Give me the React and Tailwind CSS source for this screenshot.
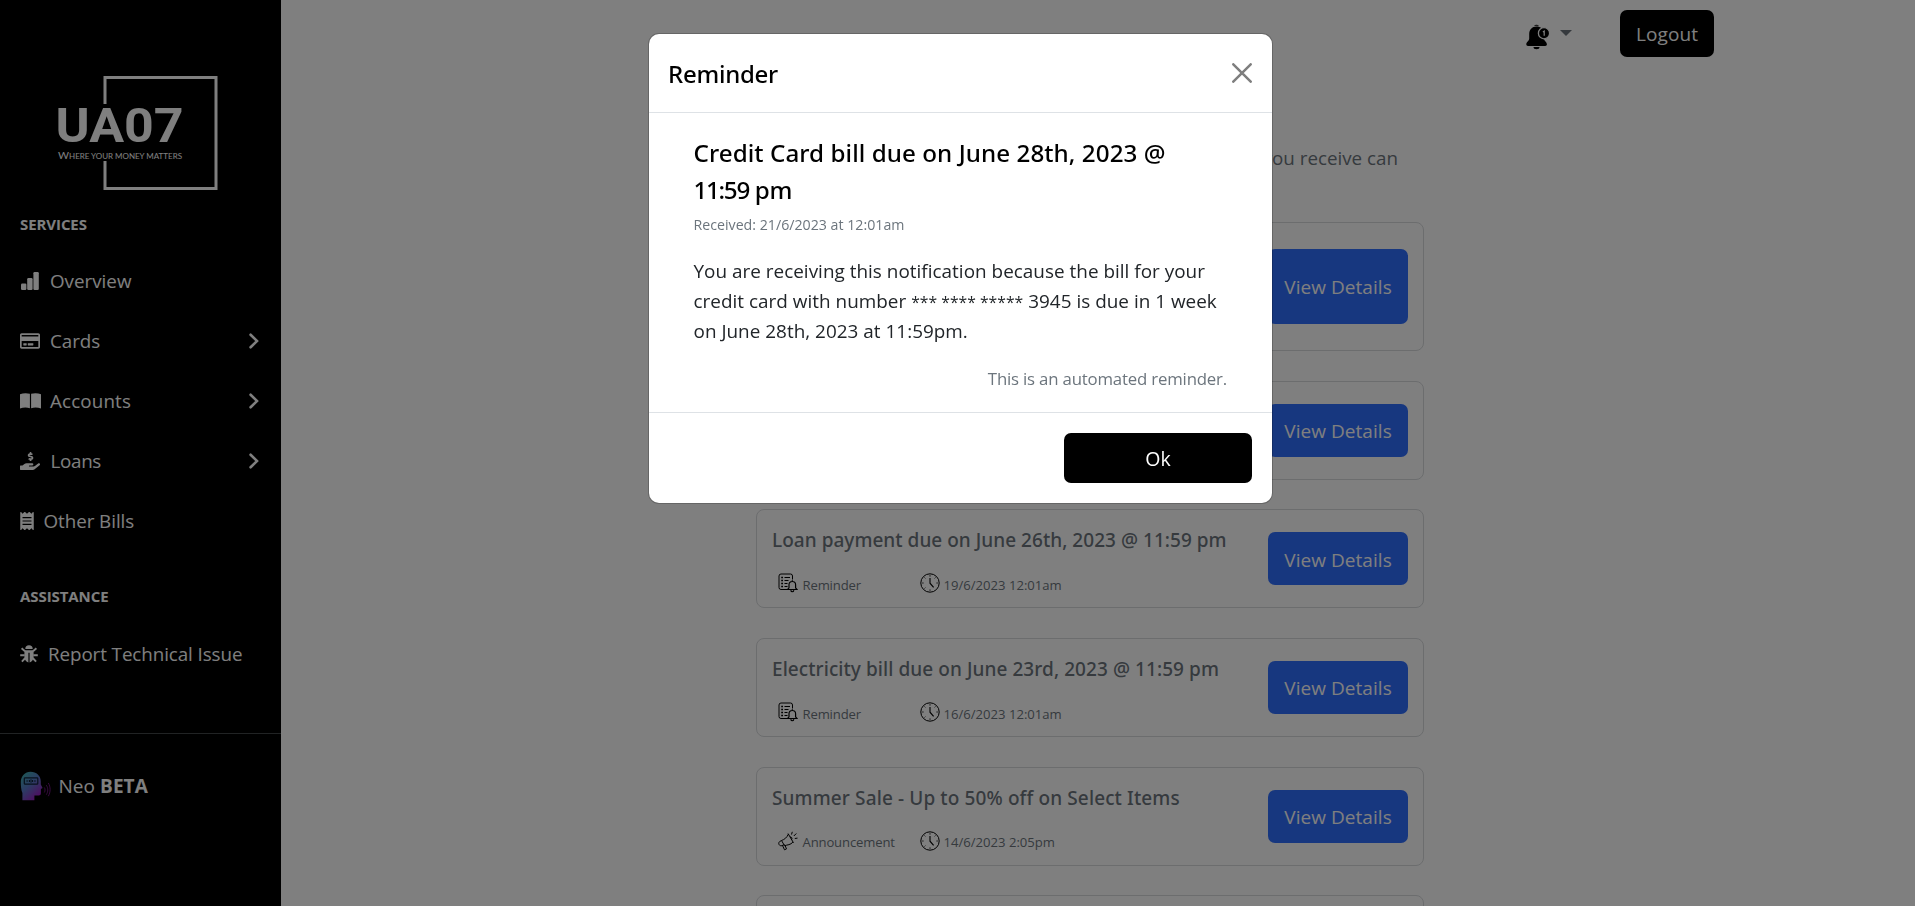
import React from 'react';
import { FaRegCreditCard, FaHandHoldingUsd, FaReceipt } from 'react-icons/fa';

function BarsIcon() {
  return (
    <svg className="h-[18px] w-[18px]" viewBox="0 0 18 18" fill="currentColor">
      <rect x="0" y="11.5" width="5.400" height="6.5" rx="1.2" />
      <rect x="6.200" y="6" width="5.400" height="12" rx="1.2" />
      <rect x="12.400" y="0" width="5.400" height="18" rx="1.2" />
    </svg>
  );
}

function BookIcon() {
  return (
    <svg className="h-4 w-[21px]" viewBox="0 0 21 16" fill="currentColor">
      <path d="M0 1.2C3 -.1 7 -.2 9.900 .8v14.400C7 14.200 3 14.200 0 15.600z" />
      <path d="M21 1.2C18 -.1 14 -.2 11.100 .8v14.400c2.900-1 6.900-1 9.900.4z" />
    </svg>
  );
}

function BugIcon() {
  return (
    <svg className="size-[18px]" viewBox="0 0 18 18" fill="currentColor">
      <path d="M5.300 3.900a3.700 3.700 0 0 1 7.400 0z" />
      <path d="M4.400 5.200h9.200v6.300c0 3.200-1.800 5.500-4 6V7.800h-1.200v9.700c-2.200-.5-4-2.800-4-6z" />
      <path d="M1.600 3.300l3.400 3M16.400 3.300l-3.400 3M.2 10.200h4.500M17.800 10.200h-4.500M1.900 16.700L5.300 13M16.100 16.700L12.700 13" stroke="currentColor" strokeWidth="1.900" />
    </svg>
  );
}

function Chevron() {
  return (
    <svg className="mr-[2px] mb-px ml-auto h-4 w-[10px]" viewBox="0 0 10 16" fill="none" stroke="currentColor" strokeWidth="2.600" strokeLinecap="round" strokeLinejoin="miter">
      <path d="M1.600 1.700L8 8l-6.400 6.300" />
    </svg>
  );
}

function Logo() {
  return (
    <svg className="h-[120px] w-[170px]" viewBox="0 0 170 120">
      <path d="M52 31V4.500h111v110.900H52V88" fill="none" stroke="#fff" strokeWidth="3" />
      <text x="2.500" y="69" textLength="128" lengthAdjust="spacingAndGlyphs" fill="#fff" className="font-[Roboto] text-[48px] font-bold">UA07</text>
      <text x="5" y="85.500" textLength="124" lengthAdjust="spacingAndGlyphs" fill="#fff" className="font-[Lato] text-[7.5px]">
        <tspan className="text-[10px]">W</tspan>HERE YOUR MONEY MATTERS
      </text>
    </svg>
  );
}

function NeoIcon() {
  return (
    <svg className="h-[30px] w-[31px]" viewBox="0 0 31 30">
      <defs>
        <linearGradient id="neo" x1="0" y1="0" x2="0.700" y2="1">
          <stop offset="0" stopColor="#38b8a8" />
          <stop offset="0.500" stopColor="#5878c8" />
          <stop offset="1" stopColor="#a018c0" />
        </linearGradient>
      </defs>
      <path d="M10.500 .8C16.500 .8 20.800 5 20.800 10.500v3l1.800 3.600-1.700.9v4.300c0 1.600-.8 2.200-2.200 2.200h-4.300v4.800H2.400V22C1 19 .8 14 .8 11 .8 5.500 5 .8 10.500 .8z" fill="url(#neo)" />
      <rect x="4.300" y="6.800" width="13.500" height="6.400" rx=".8" fill="none" stroke="#10233a" strokeWidth="1.200" />
      <path d="M6.300 10h2M13.800 10h2M9.500 9v2M11 8.300v3.400M12.500 9v2" stroke="#10233a" strokeWidth="1" />
      <path d="M24.300 16.500c1 1.500 1 3.400 0 5M26.300 14.200c2 3 2 6.400 0 9.500M28.300 12c2.400 4 2.400 9 0 13.200" fill="none" stroke="#8a1ba0" strokeWidth=".8" />
    </svg>
  );
}

function BellIcon() {
  return (
    <svg className="h-[26px] w-[24px]" viewBox="0 0 24 26">
      <path d="M8 1.800a2.800 1.800 0 0 1 5 0zM7.500 23h6a3 2.200 0 0 1-6 0z" />
      <path d="M10.500 2.600C6 2.600 3.200 6 3.200 10v4.500C3.200 17 .3 18 .3 20.300c0 1.200.7 1.700 1.700 1.700h17.200c1.100 0 1.700-.6 1.700-1.700 0-2.300-2.800-3.300-3-5.800z" />
      <path d="M10.500 2.600c4 0 7 2.600 7.400 6.800v5.600H10z" />
      <circle cx="18" cy="9.200" r="5.600" fill="#000" stroke="#fff" strokeWidth="1.300" />
      <path d="M16.900 8l1.300-.9v4.600" fill="none" stroke="#fff" strokeWidth="1.200" />
    </svg>
  );
}

function ReminderIcon() {
  return (
    <svg className="h-5 w-5" viewBox="0 0 20 20" fill="none" stroke="#000" strokeWidth="1">
      <path d="M9.500 16.500H3a2 2 0 0 1-2-2V3a2 2 0 0 1 2-2h9.500a2 2 0 0 1 2 2v3.500" />
      <path d="M3.200 4.500h1.800M3.200 7.500h1.800M3.200 10.500h1.800M3.200 13.500h1.800" strokeWidth="1.700" />
      <path d="M6.500 4.500h5.500M6.500 7.500h4M6.500 10.500h3M6.500 13.500h3" />
      <path d="M9.600 16.500l1.400-1.700v-3a3.300 3.300 0 0 1 6.600 0v3l1.400 1.700zM14.300 8.500V7.200M12.700 17.300c.6 1.900 2.600 1.900 3.200 0" strokeWidth="1.200" />
    </svg>
  );
}

function MegaphoneIcon() {
  return (
    <svg className="h-5 w-5" viewBox="0 0 20 20" fill="none" stroke="#000" strokeWidth="1" strokeLinejoin="round">
      <path d="M10 2.500l5.500 9.300M10.300 3.200C9 6.500 6.500 8.500 3.500 9.500l3 5.200c3-.9 6-.8 8.400-3.500" />
      <path d="M3.500 9.500l-1.800 1c-1 .8-1.200 2-.6 3.100s1.800 1.400 2.900 1l2.500-1M4.500 14.500l2 4.300 2-.9-1.500-3.500M12 6c1.500-.3 2.500 1.200 1.700 2.500" />
      <path d="M13.500 3.500l.8-2.700M15.800 5l2.500-2.500M16.800 7.500l2.700-.4" />
    </svg>
  );
}

function ClockIcon() {
  return (
    <svg className="h-5 w-5" viewBox="0 0 20 20" fill="none" stroke="#000" strokeWidth="1">
      <circle cx="10" cy="10" r="9.200" />
      <path d="M10 5v5.200l3.600 4.200" strokeWidth="1.100" />
      <path d="M10 2.300v1.200M10 16.500v1.200M2.300 10h1.200M16.500 10h1.200M4.600 4.600l.7.7M14.700 5.300l.7-.7M4.600 15.400l.7-.7" />
    </svg>
  );
}

function NavItem({ icon, label, chevron, gap, tracking }) {
  return (
    <a className={`flex h-[60px] items-center pr-5 pl-5 text-[18.8px] ${tracking || ''}`}>
      <span className={`flex shrink-0 items-center ${gap}`}>{icon}</span>
      <span>{label}</span>
      {chevron && <Chevron />}
    </a>
  );
}

function Sidebar() {
  return (
    <aside className="h-[906px] w-[281px] shrink-0 bg-black text-white">
      <div className="pt-[73px] pl-[53px]"><Logo /></div>
      <h2 className="mt-[21px] pl-5 text-[15px] leading-5 font-bold tracking-[-0.080px]">SERVICES</h2>
      <nav className="mt-[17px]">
        <NavItem icon={<span className="ml-px"><BarsIcon /></span>} label="Overview" gap="w-[30px]" />
        <NavItem icon={<FaRegCreditCard className="h-[18px] w-5" />} label="Cards" gap="w-[30px]" tracking="tracking-[-0.05px]" chevron />
        <NavItem icon={<BookIcon />} label="Accounts" gap="w-[30px]" tracking="tracking-[0.14px]" chevron />
        <NavItem icon={<FaHandHoldingUsd className="size-5" />} label="Loans" gap="w-[30.500px]" tracking="tracking-[-0.3px]" chevron />
        <NavItem icon={<FaReceipt className="h-[18px] w-[14px]" />} label="Other Bills" gap="w-[23.500px]" tracking="tracking-[-0.05px]" />
      </nav>
      <h2 className="mt-[35px] pl-5 text-[15px] leading-5 font-bold tracking-[-0.080px]">ASSISTANCE</h2>
      <div className="mt-[18px]">
        <NavItem icon={<BugIcon />} label="Report Technical Issue" gap="w-[28px]" tracking="tracking-[-0.08px]" />
      </div>
      <div className="mt-[49px] border-t border-[#424649] pt-[37px] pl-5">
        <div className="flex items-center gap-[7.500px] text-[19px] tracking-[0.060px]">
          <NeoIcon />
          <span>Neo <b className="font-bold">BETA</b></span>
        </div>
      </div>
    </aside>
  );
}

function DetailsButton({ tall }) {
  return (
    <button className={`w-[140px] shrink-0 rounded-[7px] bg-[#2e6eff] pt-[2px] text-[19px] tracking-[0.05px] text-white ${tall ? 'h-[75px]' : 'h-[53px]'}`}>
      View Details
    </button>
  );
}

function Notification({ title, type, date, tall, tracking }) {
  return (
    <article className={`flex w-[668px] shrink-0 items-center rounded-lg border border-[#d8dadd] pr-[15px] pl-[15px] text-[#6c757d] ${tall ? 'h-[129px]' : 'h-[99px]'}`}>
      {title && (
        <div className="flex h-full w-[480px] flex-col pt-4">
          <h3 className={`font-['Noto_Sans'] text-[19px] leading-[28px] font-medium ${tracking || ''}`}>{title}</h3>
          <div className="mt-[17.500px] flex items-center pl-[5.500px] text-[13.100px] leading-5">
            {type === 'Reminder' ? <ReminderIcon /> : <MegaphoneIcon />}
            <span className="mt-[3px] ml-[5px] w-[117px] tracking-[-0.15px]">{type}</span>
            <ClockIcon />
            <span className="mt-[3px] ml-1">{date}</span>
          </div>
        </div>
      )}
      <div className="ml-auto"><DetailsButton tall={tall} /></div>
    </article>
  );
}

function Modal() {
  return (
    <div className="fixed inset-0 z-10 flex items-start justify-center bg-black/50 pt-[34px] pl-[6px]">
      <section role="dialog" className="w-[623px] overflow-hidden rounded-[10px] bg-white text-[#212529] ring-1 ring-black/20">
        <header className="flex h-[79px] items-center justify-between border-b border-[#dee2e6] pr-5 pl-[19px]">
          <h2 className="pt-[2px] font-['Noto_Sans'] text-[24px] font-medium tracking-[-0.250px] text-black">Reminder</h2>
          <svg className="h-5 w-5" viewBox="0 0 20 20" stroke="#7f7f7f" strokeWidth="2.500" strokeLinecap="round">
            <path d="M1.300 1.300l17.400 17.400M18.700 1.300L1.300 18.700" />
          </svg>
        </header>
        <div className="h-[299px] pt-[21px] pr-[45px] pl-[44.500px]">
          <h3 className="font-['Noto_Sans'] text-[24.200px] leading-[37px] font-medium tracking-[0.060px] text-black">
            Credit Card bill due on June 28th, 2023 @<br />
            <span className="tracking-[-1.300px]">11:59</span><span className="tracking-[-0.400px]"> pm</span>
          </h3>
          <p className="mt-[7px] text-[14.200px] leading-[20px] text-[#6c757d]">Received: 21/6/2023 at 12:01am</p>
          <p className="mt-[21px] text-[18.900px] leading-[30px] tracking-[0.020px] whitespace-nowrap">
            You are receiving this notification because the bill for your<br />
            credit card with number <span className="text-[15.700px] leading-none">*** **** *****</span> 3945 is due in 1 week<br />
            on June 28th, 2023 at 11:59pm.
          </p>
          <p className="mt-5 text-right text-[16.800px] leading-[26px] tracking-[-0.180px] text-[#6c757d]">This is an automated reminder.</p>
        </div>
        <footer className="flex h-[91px] items-start justify-end border-t border-[#dee2e6] pt-5 pr-5">
          <button className="h-[50px] w-[188px] rounded-[7px] bg-black pt-px text-[19.500px] text-white">Ok</button>
        </footer>
      </section>
    </div>
  );
}

export default function App() {
  return (
    <div className="flex h-[906px] w-full overflow-hidden bg-white font-['Open_Sans',sans-serif]">
      <Sidebar />
      <main className="h-full flex-1 overflow-hidden">
        <div className="flex h-[57px] items-start justify-end pt-[10px] pr-[201px]">
          <div className="mt-[14px]"><BellIcon /></div>
          <svg className="mt-5 mr-12 ml-[10px] h-[6px] w-3" viewBox="0 0 12 6" fill="#6c757d"><path d="M0 0h12L6 6z" /></svg>
          <button className="h-[47px] w-[94px] rounded-[7px] bg-black pt-px text-[19px] tracking-[0.100px] text-white">Logout</button>
        </div>
        <div className="ml-[475px] flex w-[668px] flex-col">
          <p className="mt-[86px] h-[79px] pr-[26px] text-right text-[18.800px] leading-[30px] text-[#6c757d]">you receive can</p>
          <div className="flex flex-col gap-[29.700px]">
            <Notification tall />
            <Notification />
            <Notification title="Loan payment due on June 26th, 2023 @ 11:59 pm" type="Reminder" date="19/6/2023 12:01am" tracking="tracking-[0.030px]" />
            <Notification title="Electricity bill due on June 23rd, 2023 @ 11:59 pm" type="Reminder" date="16/6/2023 12:01am" tracking="tracking-[0.070px]" />
            <Notification title="Summer Sale - Up to 50% off on Select Items" type="Announcement" date="14/6/2023 2:05pm" tracking="tracking-[0.120px]" />
            <Notification />
          </div>
        </div>
      </main>
      <Modal />
    </div>
  );
}
